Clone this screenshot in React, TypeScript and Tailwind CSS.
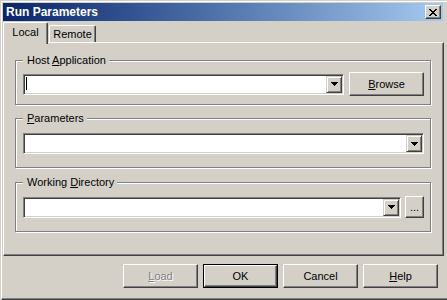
const raised =
  "border border-white border-r-[#404040] border-b-[#404040] shadow-[inset_-1px_-1px_0_#808080]";
const sunken =
  "border border-[#808080] border-r-white border-b-white shadow-[inset_1px_1px_0_#404040,inset_-1px_-1px_0_#d4d0c8]";

function DropArrow() {
  return (
    <div className="flex h-full w-[16px] shrink-0 items-center justify-center border border-[#d4d0c8] border-r-[#404040] border-b-[#404040] bg-[#d4d0c8] shadow-[inset_1px_1px_0_#fff,inset_-1px_-1px_0_#808080]">
      <svg width="7" height="4" viewBox="0 0 7 4" shapeRendering="crispEdges">
        <path d="M0 0h7v1H0zM1 1h5v1H1zM2 2h3v1H2zM3 3h1v1H3z" fill="#000" />
      </svg>
    </div>
  );
}

function Combo({ caret = false }: { caret?: boolean }) {
  return (
    <div className={`flex h-[21px] min-w-0 flex-1 bg-white p-[1px] ${sunken}`}>
      <div className="flex-1">
        {caret && <div className="ml-[1px] mt-[1px] h-[13px] w-[1px] bg-black" />}
      </div>
      <DropArrow />
    </div>
  );
}

function Button({ children, w = "w-[75px]", h = "h-[24px]" }: { children: React.ReactNode; w?: string; h?: string }) {
  return (
    <div className={`flex ${w} ${h} shrink-0 items-center justify-center bg-[#d4d0c8] ${raised}`}>
      {children}
    </div>
  );
}

function Group({ label, children, className }: { label: React.ReactNode; children: React.ReactNode; className: string }) {
  return (
    <fieldset
      className={`border border-[#808080] pl-[7px] pr-[6px] shadow-[inset_1px_1px_0_#fff,1px_1px_0_#fff] ${className}`}
    >
      <legend className="bg-[#d4d0c8] pl-[4px] pr-[3px] leading-[13px]">{label}</legend>
      {children}
    </fieldset>
  );
}

export default function App() {
  return (
    <div className="h-[300px] w-[447px] overflow-hidden bg-[#d4d0c8] font-['Liberation_Sans',Arial,sans-serif] text-[11px] leading-[13px] text-black">
      <div className="ml-[1px] mt-[1px] flex h-[299px] flex-col border-l border-t border-b border-white border-b-[#404040] pl-[1px] pr-[3px] pt-[1px] shadow-[inset_0_-1px_0_#808080]">
        {/* title bar */}
        <div className="mr-[1px] flex h-[18px] shrink-0 items-center justify-between bg-linear-to-r from-[#0a246a] to-[#a6caf0] pl-[3px] pr-[2px]">
          <span className="text-[12px] font-bold text-white">Run Parameters</span>
          <div className={`flex h-[14px] w-[16px] items-center justify-center bg-[#d4d0c8] ${raised}`}>
            <svg width="8" height="7" viewBox="0 0 8 7" shapeRendering="crispEdges">
              <path
                d="M0 0h2v1H0zM6 0h2v1H6zM1 1h2v1H1zM5 1h2v1H5zM2 2h4v1H2zM3 3h2v1H3zM2 4h4v1H2zM1 5h2v1H1zM5 5h2v1H5zM0 6h2v1H0zM6 6h2v1H6z"
                fill="#000"
              />
            </svg>
          </div>
        </div>

        {/* tabs */}
        <div className="mt-[1px] flex items-end">
          <div className="relative z-10 -mb-[2px] flex h-[22px] w-[45px] justify-center rounded-t-[2px] border-l border-t border-r border-white border-r-[#404040] bg-[#d4d0c8] pt-[3px] shadow-[inset_-1px_0_0_#808080]">
            Local
          </div>
          <div className="ml-[1px] flex h-[17px] w-[47px] justify-center rounded-t-[2px] border-l border-t border-r border-white border-r-[#404040] pt-[2px] shadow-[inset_-1px_0_0_#808080]">
            Remote
          </div>
        </div>

        {/* tab page */}
        <div className="flex flex-col border border-white border-r-[#404040] border-b-[#404040] pb-[23px] pl-[11px] pr-[12px] pt-[11px] shadow-[inset_-1px_-1px_0_#808080]">
          <Group
            className="pb-[8px] pt-[5px]"
            label={
              <>
                Host <u>A</u>pplication
              </>
            }
          >
            <div className="flex items-center gap-[5px]">
              <Combo caret />
              <Button>
                <span>
                  <u>B</u>rowse
                </span>
              </Button>
            </div>
          </Group>

          <Group
            className="mt-[7px] pb-[13px] pt-[8px]"
            label={
              <>
                <u>P</u>arameters
              </>
            }
          >
            <div className="flex">
              <Combo />
            </div>
          </Group>

          <Group
            className="mt-[8px] pb-[13px] pt-[7px]"
            label={
              <>
                Working <u>D</u>irectory
              </>
            }
          >
            <div className="flex items-center gap-[4px]">
              <Combo />
              <Button w="w-[19px]" h="h-[22px]">
                ...
              </Button>
            </div>
          </Group>
        </div>

        {/* dialog buttons */}
        <div className="mr-[6px] mt-[8px] flex justify-end gap-[5px]">
          <Button>
            <span className="text-[#808080] [text-shadow:1px_1px_0_#fff]">
              <u>L</u>oad
            </span>
          </Button>
          <div className="h-[24px] w-[75px] border border-black">
            <div className={`flex h-full w-full items-center justify-center bg-[#d4d0c8] ${raised}`}>OK</div>
          </div>
          <Button>Cancel</Button>
          <Button>
            <span>
              <u>H</u>elp
            </span>
          </Button>
        </div>
      </div>
    </div>
  );
}
